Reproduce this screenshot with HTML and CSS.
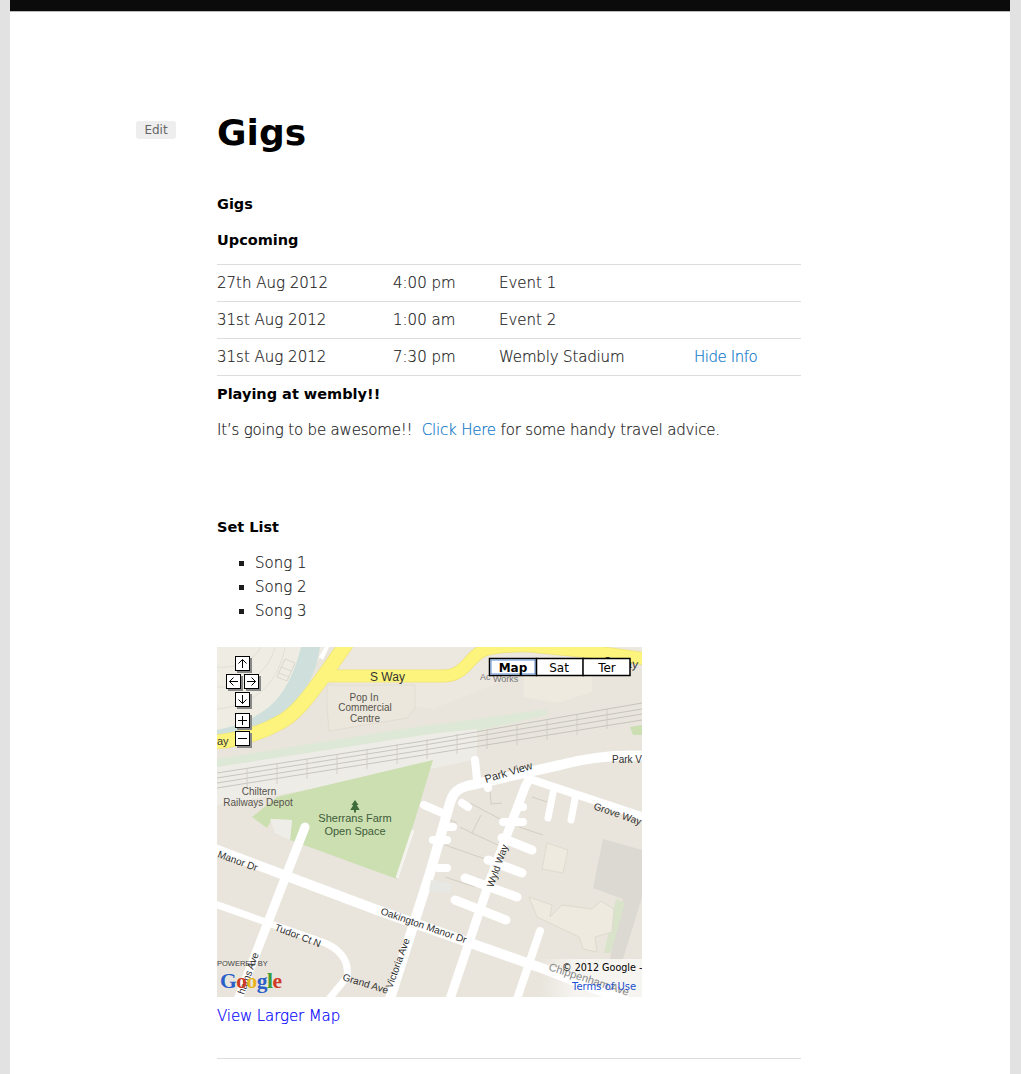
FILE: index.html
```html
<!DOCTYPE html>
<html lang="en">
<head>
<meta charset="utf-8">
<title>Gigs</title>
<link rel="stylesheet" href="styles.css">
</head>
<body>
<div class="page">
  <div class="topbar"></div>
  <article class="article">
    <a class="edit" href="#">Edit</a>
    <h1 class="title">Gigs</h1>
    <p class="heading">Gigs</p>
    <p class="heading">Upcoming</p>
    <table class="gigs">
      <tr><td class="c-date">27th Aug 2012</td><td class="c-time">4:00 pm</td><td class="c-name">Event 1</td><td></td></tr>
      <tr><td>31st Aug 2012</td><td>1:00 am</td><td>Event 2</td><td></td></tr>
      <tr><td>31st Aug 2012</td><td>7:30 pm</td><td class="tight">Wembly Stadium</td><td><a class="link tight-more" href="#">Hide Info</a></td></tr>
    </table>
    <p class="heading">Playing at wembly!!</p>
    <p class="para">It’s going to be awesome!!&nbsp; <a class="link" href="#">Click Here</a> for some handy travel advice.</p>
    <p class="heading setlist">Set List</p>
    <ul class="songs">
      <li>Song 1</li>
      <li>Song 2</li>
      <li>Song 3</li>
    </ul>
    <svg class="map" width="425" height="350" viewBox="0 0 425 350" xmlns="http://www.w3.org/2000/svg">
      <defs>
        <linearGradient id="copyfade" x1="0" x2="1" y1="0" y2="0">
          <stop offset="0" stop-color="#fff" stop-opacity="0"/>
          <stop offset=".35" stop-color="#fff" stop-opacity=".6"/>
          <stop offset="1" stop-color="#fff" stop-opacity=".6"/>
        </linearGradient>
      </defs>
      <rect width="425" height="350" fill="#e9e5dc"/>
      <!-- top-left stadium and river -->
      <path d="M0 0H112L80 40 50 70 0 88Z" fill="#efede3"/>
      <path d="M0 20C20 22 38 12 44 0M0 40C30 42 52 24 58 0M0 62C40 58 62 34 68 0" fill="none" stroke="#e2e0d6"/>
      <path d="M68 12L78 16 70 34 60 30ZM64 20L74 24M62 26L72 30" fill="none" stroke="#d9d8cf"/>
      <path d="M0 83C26 78 48 66 60 52 70 40 78 24 84 0H103C100 24 90 44 70 66 50 84 25 88 0 92Z" fill="#cfe0dc"/>
      <path d="M108 0L112 0 106 13 102 10Z" fill="#fff"/>
      <path d="M125 0H425V6L330 20 270 40 215 62 135 50 116 42Z" fill="#ece8df"/>
      <path d="M110 38H198V61L190 71 112 84 110 60Z" fill="#ebe7dd" stroke="#e2ddd2"/>
      <path d="M307 22 L375 20V45L340 56 307 50Z" fill="#eeeadf"/>
      <!-- rail corridor -->
      <path d="M0 112L212 78 240 75 330 62 330 68 240 88 212 88 0 124Z" fill="#dde8d6"/>
      <path d="M0 120L213 87 260 82 260 112 213 122 0 158Z" fill="#eeece6"/>
      <path d="M0 126L213 93 425 56M0 131L213 97 425 62M0 136L213 102 425 67M0 141L213 107 425 73" fill="none" stroke="#bdbbb6" stroke-width=".8"/>
      <path d="M30 122V142M60 117V137M90 112V132M120 107V127M150 102V122M180 97V117M210 92V112M240 87V107M270 82V102M300 78V98M330 73V93M360 68V88M390 62V82" stroke="#cbc9c3" stroke-width=".8"/>
      <path d="M413 80L425 78V88L416 88Z" fill="#cbdfb2"/>
      <!-- park -->
      <path d="M35 170L60 150 216 113 180 232 73 193 75 173 55 172 50 181Z" fill="#cbdfb0"/>
      <path d="M53 172L75 173 73 193 58 186Z" fill="#efede7"/>
      <path d="M180 231L196 183" stroke="#f4f3ee" stroke-width="3" fill="none"/>
      <!-- buildings -->
      <path d="M386 192L425 203V250L406 312 393 312 406 252 376 241Z" fill="#dcd8d2"/>
      <path d="M399 252L408 256 394 306 387 306Z" fill="#d8e3ca"/>
      <path d="M330 196L351 203 346 226 325 222Z" fill="#eeeadf" stroke="#e0dbcf"/>
      <path d="M312 250L335 258 333 270 345 258 375 262 384 254 397 262 395 285 378 290 380 305 366 302 362 290 320 270Z" fill="#eeeadf" stroke="#dfdacd"/>
      <!-- parcel lines -->
      <path d="M253 156L285 173M273 142L274 157 285 156M243 180L255 186 264 168M255 186L285 200M228 198L268 212M228 230L258 240M222 168L240 176M315 150L333 156M302 180L326 188" fill="none" stroke="#d3cec2"/>
      <!-- yellow roads -->
      <g fill="none" stroke-linecap="butt" stroke-linejoin="round">
        <path d="M130 -4L106 30C90 52 78 68 62 76 40 88 20 93 -2 95" stroke="#efe377" stroke-width="15"/>
        <path d="M105 29H226C246 29 250 14 262 6 270 0 300 -3 323 0L386 6 430 12" stroke="#efe377" stroke-width="13"/>
        <path d="M130 -4L106 30C90 52 78 68 62 76 40 88 20 93 -2 95" stroke="#fdf47e" stroke-width="13.500"/>
        <path d="M105 29H226C246 29 250 14 262 6 270 0 300 -3 323 0L386 6 430 12" stroke="#fdf47e" stroke-width="11.500"/>
      </g>
      <!-- white roads -->
      <g fill="none" stroke="#fff" stroke-linecap="round" stroke-linejoin="round">
        <path d="M-5 201L160 263 330 323 430 362" stroke-width="10"/>
        <path d="M88 180L20 355" stroke-width="9"/>
        <path d="M-5 256L108 296C126 304 132 316 130 330L112 352" stroke-width="7"/>
        <path d="M172 355L213 226 233 156C236 146 240 142 250 139L343 118C370 111 400 107 430 109" stroke-width="10"/>
        <path d="M232 355L273 233 288 193 308 140 312 132" stroke-width="9"/>
        <path d="M316 133L430 171" stroke-width="8"/>
        <path d="M299 355L323 284" stroke-width="8"/>
        <path d="M285 191L315 203M271 213L305 226M248 231L300 250M238 253L289 273" stroke-width="9"/>
        <path d="M336 146L331 171M358 152L354 173" stroke-width="7"/>
        <path d="M258 113L260 132" stroke-width="8"/>
        <path d="M271 139L271 141M245 156L251 160M230 180L236 180M216 193L230 193M221 221L230 221M286 175L306 175M300 160L306 160M207 158L230 168" stroke-width="8"/>
      </g>
      <path d="M213 238L234 242" stroke="#e7e7e4" stroke-width="10"/>
      <!-- labels -->
      <g class="m-label">
        <text x="153" y="34" class="m-road">S Way</text>
        <text x="0" y="98" class="m-road-s">ay</text>
        <text x="147" y="54" text-anchor="middle">Pop In</text>
        <text x="148" y="64" text-anchor="middle">Commercial</text>
        <text x="148" y="75" text-anchor="middle">Centre</text>
        <text x="42" y="148" text-anchor="middle">Chiltern</text>
        <text x="41" y="159" text-anchor="middle">Railways Depot</text>
        <text x="138" y="175" text-anchor="middle" class="m-park">Sherrans Farm</text>
        <text x="138" y="188" text-anchor="middle" class="m-park">Open Space</text>
        <text x="263" y="33" class="m-small">Ac</text>
        <text x="276" y="35" class="m-small">Works</text>
        <text x="0" y="210" transform="rotate(20 0 210)" class="m-street">Manor Dr</text>
        <text x="163" y="267" transform="rotate(19 163 267)" class="m-street">Oakington Manor Dr</text>
        <text x="57" y="283" transform="rotate(21 57 283)" class="m-street">Tudor Ct N</text>
        <text x="125" y="333" transform="rotate(17 125 333)" class="m-street">Grand Ave</text>
        <text x="175" y="342" transform="rotate(-70 175 342)" class="m-street">Victoria Ave</text>
        <text x="27" y="348" transform="rotate(-70 27 348)" class="m-street">hams Ave</text>
        <text x="276" y="241" transform="rotate(-70 276 241)" class="m-street">Wyld Way</text>
        <text x="269" y="136" transform="rotate(-17 269 136)" class="m-street m-wide">Park View</text>
        <text x="395" y="116" class="m-street">Park V</text>
        <text x="376" y="162" transform="rotate(19 376 162)" class="m-street">Grove Way</text>
        <text x="386" y="18" transform="rotate(6 386 18)" class="m-road">S Way</text>
      </g>
      <path d="M138 153l-3.500 5h1.800l-3 5h3.700v2.500h2v-2.500h3.700l-3-5h1.800Z" fill="#3d6b3a"/>
      <!-- copyright -->
      <rect x="323" y="312" width="102" height="38" fill="url(#copyfade)"/>
      <text x="331" y="323" transform="rotate(18 331 323)" class="m-chip">Chippenham Ave</text>
      <text x="345" y="324" class="m-copy">© 2012 Google -</text>
      <text x="355" y="343" class="m-terms">Terms of Use</text>
      <text x="0" y="319" class="m-powered">POWERED BY</text>
      <text x="3" y="341" class="m-google"><tspan fill="#2a5fc9">G</tspan><tspan fill="#cf3a26">o</tspan><tspan fill="#e6b41c">o</tspan><tspan fill="#2a5fc9">g</tspan><tspan fill="#3b9c3a">l</tspan><tspan fill="#cf3a26">e</tspan></text>
      <!-- pan and zoom controls -->
      <g class="ctl">
        <rect x="20" y="11" width="15" height="15" fill="#888"/>
        <rect x="11" y="29" width="15" height="15" fill="#888"/>
        <rect x="29" y="29" width="15" height="15" fill="#888"/>
        <rect x="20" y="47" width="15" height="15" fill="#888"/>
        <rect x="20" y="68" width="15" height="15" fill="#888"/>
        <rect x="20" y="86" width="15" height="15" fill="#888"/>
        <rect x="18.500" y="9.500" width="14" height="14" fill="#fff" stroke="#000"/>
        <path d="M25.500 21V12.500M21.500 16.500L25.500 12.500 29.500 16.500" fill="none" stroke="#000"/>
        <rect x="9.500" y="27.500" width="14" height="14" fill="#fff" stroke="#000"/>
        <path d="M21 34.500H12.500M16.500 30.500L12.500 34.500 16.500 38.500" fill="none" stroke="#000"/>
        <rect x="27.500" y="27.500" width="14" height="14" fill="#fff" stroke="#000"/>
        <path d="M30 34.500H38.500M34.500 30.500L38.500 34.500 34.500 38.500" fill="none" stroke="#000"/>
        <rect x="18.500" y="45.500" width="14" height="14" fill="#fff" stroke="#000"/>
        <path d="M25.500 48V56.500M21.500 52.500L25.500 56.500 29.500 52.500" fill="none" stroke="#000"/>
        <rect x="18.500" y="66.500" width="14" height="14" fill="#fff" stroke="#000"/>
        <path d="M25.500 69V78M21 73.500H30" fill="none" stroke="#000"/>
        <rect x="18.500" y="84.500" width="14" height="14" fill="#fff" stroke="#000"/>
        <path d="M21 91.500H30" fill="none" stroke="#000"/>
      </g>
      <!-- map type -->
      <g class="mt">
        <rect x="272.500" y="11.500" width="47" height="17" fill="#fff" stroke="#000" stroke-width="1.500"/>
        <rect x="274" y="13" width="44" height="14" fill="none" stroke="#5b8bd0"/>
        <rect x="319.500" y="11.500" width="47" height="17" fill="#fff" stroke="#000" stroke-width="1.500"/>
        <rect x="366" y="11.500" width="47" height="17" fill="#fff" stroke="#000" stroke-width="1.500"/>
        <text x="296" y="24.500" text-anchor="middle" class="mt-on">Map</text>
        <text x="342" y="24.500" text-anchor="middle">Sat</text>
        <text x="390" y="24.500" text-anchor="middle">Ter</text>
      </g>
    </svg>
    <p class="larger"><a href="#">View Larger Map</a></p>
    <hr class="rule">
  </article>
</div>
</body>
</html>
```
FILE: styles.css
```css
* { box-sizing: border-box; }
html, body { margin: 0; padding: 0; background: #e2e2e2; }
body { font-family: "DejaVu Sans", sans-serif; font-size: 15px; font-weight: 200; color: #1c1c1c; line-height: 24px; }
.page { width: 1000px; margin: 0 10px; background: #fff; height: 1074px; overflow: hidden; }
.topbar { height: 12px; background: #0b0b0b; border-bottom: 1px solid #bbb; }
.article { position: relative; padding: 94px 209px 0 207px; }
.edit { position: absolute; left: 126px; top: 109px; width: 40px; height: 18px; background: #eee; border-radius: 3px; color: #666; font-size: 12px; line-height: 18px; text-align: center; text-decoration: none; font-weight: 400; }
.title { margin: 0; font-size: 36px; font-weight: 700; color: #000; line-height: 54px; }
.heading { margin: 0 0 12px; color: #000; font-size: 14.500px; font-weight: 700; line-height: 24px; }
.title + .heading { margin-top: 32px; }
.gigs { width: 584px; border-collapse: collapse; table-layout: fixed; margin-bottom: 6px; -webkit-text-stroke: .2px; }
.gigs td { padding: 6px 0; border-top: 1px solid #ddd; border-bottom: 1px solid #ddd; height: 37px; }
.c-date { width: 176px; }
.c-time { width: 106px; }
.c-name { width: 195px; }
.link { color: #0d76c8; text-decoration: none; }
.tight { letter-spacing: -.15px; }
.tight-more { letter-spacing: -.45px; }
.para { margin: 0; letter-spacing: -.2px; word-spacing: .1px; -webkit-text-stroke: .2px; }
.setlist { margin-top: 73px; }
.songs { margin: 0 0 24px 38px; padding: 0; list-style: square; -webkit-text-stroke: .2px; }
.map { display: block; }
.larger { margin: 7px 0 0; letter-spacing: -.1px; -webkit-text-stroke: .2px; }
.larger a { color: #00f; text-decoration: none; }
.rule { margin: 30px 0 0; border: 0; border-top: 1px solid #ddd; }
.m-label text { font-family: "Liberation Sans", sans-serif; font-size: 10px; fill: #57534c; font-weight: 400; }
.m-label .m-road { font-size: 12px; fill: #333; }
.m-label .m-road-s { font-size: 11px; fill: #333; }
.m-label .m-park { font-size: 11px; fill: #3f5c3a; }
.m-label .m-street { font-size: 10px; fill: #2f2f2f; }
.m-label .m-wide { font-size: 11px; }
.m-label .m-small { font-size: 9px; fill: #777; }
.m-chip { font-family: "Liberation Sans", sans-serif; font-size: 11px; fill: #888; font-weight: 400; }
.m-copy { font-family: "DejaVu Sans", sans-serif; font-size: 9.600px; fill: #000; font-weight: 400; }
.m-terms { font-family: "DejaVu Sans", sans-serif; font-size: 10px; fill: #1a4fd0; font-weight: 400; }
.m-powered { font-family: "Liberation Sans", sans-serif; font-size: 7.500px; fill: #444; font-weight: 400; }
.m-google { font-family: "Liberation Serif", serif; font-size: 21.500px; font-weight: 700; letter-spacing: -.5px; }
.mt text { font-family: "DejaVu Sans", sans-serif; font-size: 12px; fill: #000; font-weight: 400; }
.mt .mt-on { font-weight: 700; }
```
